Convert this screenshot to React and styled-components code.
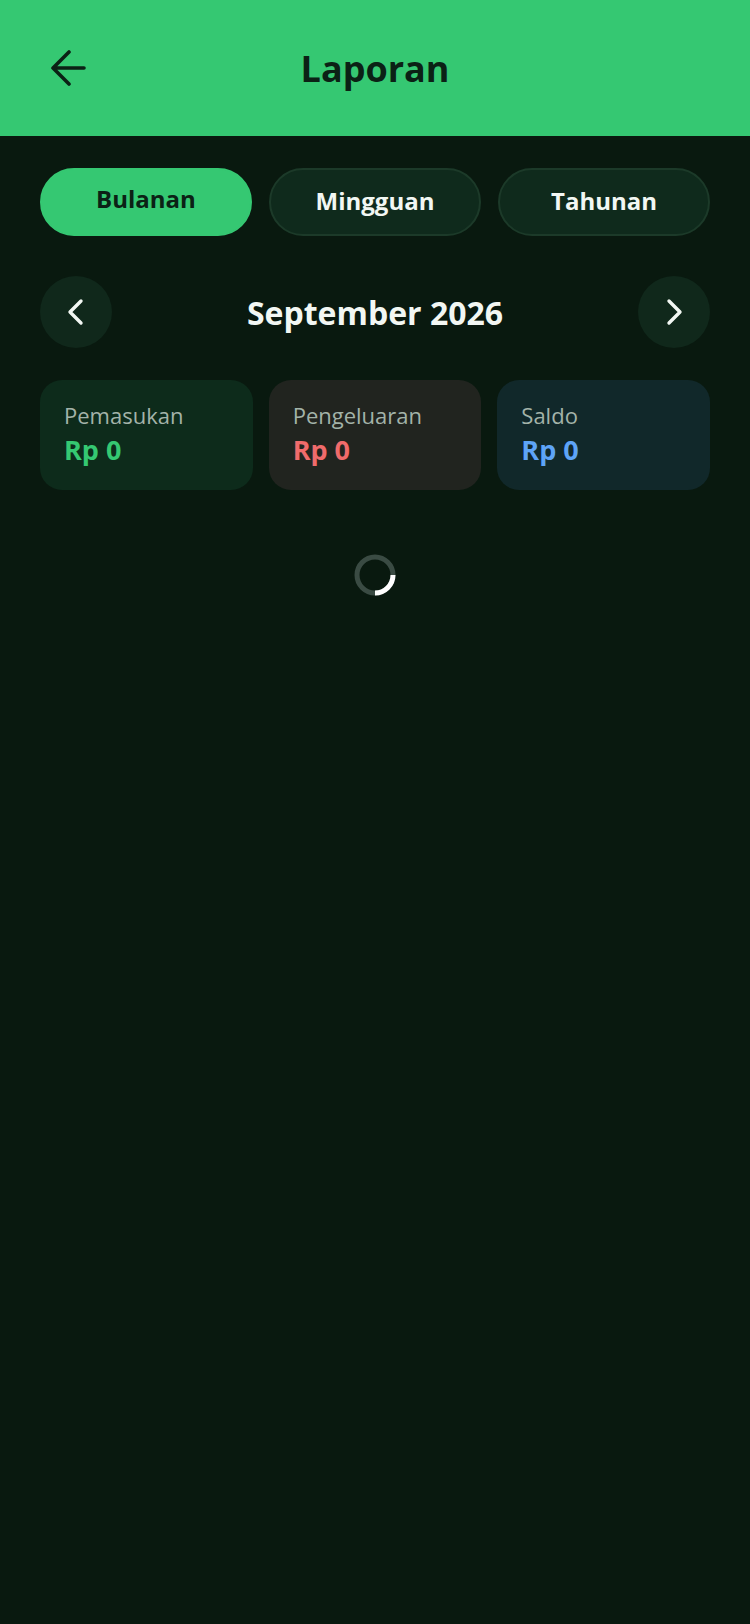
import { useState } from "react";
import styled, { createGlobalStyle } from "styled-components";

const GlobalStyle = createGlobalStyle`
  html, body {
    margin: 0;
    padding: 0;
    background: #09190f;
  }
  body {
    font-family: "Open Sans", "Noto Sans", "Liberation Sans", sans-serif;
  }
`;

const Page = styled.div`
  width: 750px;
  min-height: 1624px;
  background: #09190f;
  display: flex;
  flex-direction: column;
`;

const Header = styled.header`
  height: 136px;
  background: #35c872;
  display: grid;
  grid-template-columns: 120px 1fr 120px;
  align-items: center;
`;

const BackButton = styled.button`
  width: 48px;
  height: 48px;
  margin-left: 44px;
  padding: 0;
  border: none;
  background: none;
  display: flex;
  align-items: center;
  justify-content: center;
  color: #0b2115;
  cursor: pointer;
`;

const Title = styled.h1`
  margin: 0;
  text-align: center;
  font-size: 36px;
  font-weight: 700;
  color: #0b2115;
`;

const Content = styled.main`
  padding: 32px 40px;
  display: flex;
  flex-direction: column;
`;

const Tabs = styled.div`
  display: grid;
  grid-template-columns: repeat(3, 1fr);
  gap: 17px;
`;

const Tab = styled.button`
  height: 68px;
  border-radius: 34px;
  border: 2px solid ${(p) => (p.active ? "#35c872" : "#1c3a29")};
  background: ${(p) => (p.active ? "#35c872" : "#0f2a1c")};
  color: ${(p) => (p.active ? "#0b2115" : "#f2f7f3")};
  font-family: inherit;
  font-size: 24px;
  font-weight: 700;
  padding: 0 0 ${(p) => (p.active ? "8px" : "4px")};
  cursor: pointer;
`;

const MonthNav = styled.div`
  margin-top: 40px;
  display: flex;
  align-items: center;
  justify-content: space-between;
`;

const NavButton = styled.button`
  width: 72px;
  height: 72px;
  border-radius: 50%;
  border: none;
  background: #10281b;
  color: #f2f7f3;
  display: flex;
  align-items: center;
  justify-content: center;
  padding: 0;
  cursor: pointer;
`;

const MonthLabel = styled.div`
  font-size: 32px;
  font-weight: 700;
  color: #f2f7f3;
`;

const Cards = styled.div`
  margin-top: 32px;
  display: grid;
  grid-template-columns: repeat(3, 1fr);
  gap: 16px;
`;

const Card = styled.div`
  height: 110px;
  box-sizing: border-box;
  border-radius: 22px;
  background: ${(p) => p.bg};
  padding: 20px 24px;
  display: flex;
  flex-direction: column;
`;

const CardLabel = styled.div`
  font-size: 22px;
  line-height: 30px;
  color: #a3b3a9;
`;

const CardValue = styled.div`
  margin-top: 3px;
  font-size: 27px;
  line-height: 34px;
  font-weight: 700;
  color: ${(p) => p.color};
`;

const SpinnerWrap = styled.div`
  margin-top: 64px;
  display: flex;
  justify-content: center;
`;

const ArrowBack = () => (
  <svg width="36" height="36" viewBox="0 0 36 36" fill="none">
    <path
      d="M34 18H4M19 2L3 18l16 16"
      stroke="currentColor"
      strokeWidth="3.6"
      strokeLinecap="round"
      strokeLinejoin="round"
    />
  </svg>
);

const Chevron = ({ dir }) => (
  <svg width="32" height="32" viewBox="0 0 32 32" fill="none">
    <path
      d={dir === "left" ? "M21 5L10 16l11 11" : "M11 5l11 11-11 11"}
      stroke="currentColor"
      strokeWidth="3.4"
      strokeLinecap="round"
      strokeLinejoin="round"
    />
  </svg>
);

const Spinner = () => (
  <svg width="42" height="42" viewBox="0 0 42 42">
    <circle cx="21" cy="21" r="18" fill="none" stroke="#3a4b43" strokeWidth="5" />
    <path
      d="M39 21A18 18 0 0 1 21 39"
      fill="none"
      stroke="#ffffff"
      strokeWidth="5"
    />
  </svg>
);

const tabs = ["Bulanan", "Mingguan", "Tahunan"];

const summary = [
  { label: "Pemasukan", value: "Rp 0", bg: "#0d2b1b", color: "#35c872" },
  { label: "Pengeluaran", value: "Rp 0", bg: "#21241f", color: "#f06b6b" },
  { label: "Saldo", value: "Rp 0", bg: "#11282a", color: "#5ea4f7" },
];

const App = () => {
  const [active, setActive] = useState(0);

  return (
    <Page>
      <GlobalStyle />
      <Header>
        <BackButton aria-label="Kembali">
          <ArrowBack />
        </BackButton>
        <Title>Laporan</Title>
        <span />
      </Header>
      <Content>
        <Tabs>
          {tabs.map((t, i) => (
            <Tab key={t} active={i === active} onClick={() => setActive(i)}>
              {t}
            </Tab>
          ))}
        </Tabs>
        <MonthNav>
          <NavButton aria-label="Sebelumnya">
            <Chevron dir="left" />
          </NavButton>
          <MonthLabel>September 2026</MonthLabel>
          <NavButton aria-label="Berikutnya">
            <Chevron dir="right" />
          </NavButton>
        </MonthNav>
        <Cards>
          {summary.map((s) => (
            <Card key={s.label} bg={s.bg}>
              <CardLabel>{s.label}</CardLabel>
              <CardValue color={s.color}>{s.value}</CardValue>
            </Card>
          ))}
        </Cards>
        <SpinnerWrap>
          <Spinner />
        </SpinnerWrap>
      </Content>
    </Page>
  );
};

export default App;
